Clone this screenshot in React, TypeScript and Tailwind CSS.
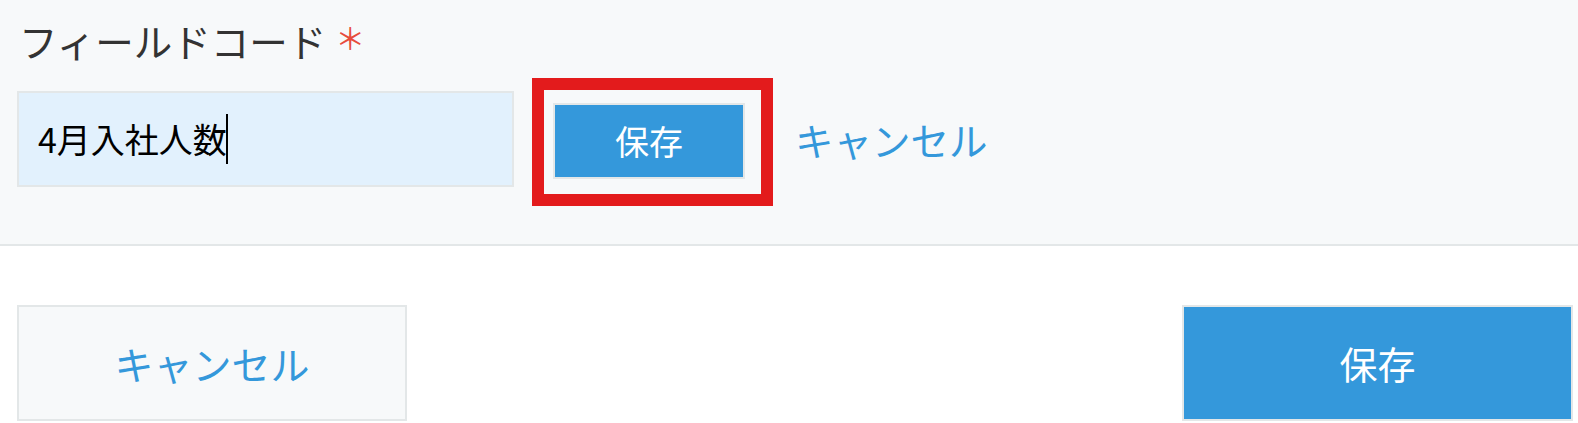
const font = { fontFamily: '"Noto Sans CJK JP", "Noto Sans", sans-serif' };

export default function App() {
  return (
    <div className="w-[1578px] h-[423px] overflow-hidden bg-white" style={font}>
      <section className="h-[246px] bg-[#f7f9fa] border-b-2 border-[#e3e7e8] pl-[17px] pt-[14px]">
        <div className="flex items-center h-[52px] leading-none text-[#333333]">
          <span className="ml-[2px] text-[38.5px]">フィールドコード</span>
          <span className="ml-[9px] text-[30px] text-[#e74c3c] -mt-[6px]">＊</span>
        </div>

        <div className="flex items-center mt-[25px]">
          <div className="w-[497px] h-[96px] border-2 border-[#e3e7e8] bg-[#e2f1fd] flex items-center pl-[19px]">
            <span className="text-[34px] leading-none text-black">4月入社人数</span>
            <span className="inline-block w-[2px] h-[50px] bg-black -ml-[1px]" />
          </div>

          <div className="relative ml-[39px] mt-[4px]">
            <button className="w-[192px] h-[76px] border-2 border-[#e3e7e8] bg-[#3498db] text-white text-[34px] leading-none">
              保存
            </button>
            <div className="absolute left-[-21px] top-[-25px] right-[-28px] bottom-[-27px] border-[12px] border-[#e31b1c]" />
          </div>

          <a className="ml-[50px] text-[38.5px] leading-none text-[#3498db]">キャンセル</a>
        </div>
      </section>

      <div className="flex justify-between pl-[17px] pr-[5px] pt-[59px]">
        <button className="w-[390px] h-[116px] border-2 border-[#e3e7e8] bg-[#f7f9fa] text-[39px] leading-none text-[#3498db]">
          キャンセル
        </button>
        <button className="w-[391px] h-[116px] border-2 border-[#e3e7e8] bg-[#3498db] text-[38px] leading-none text-white">
          保存
        </button>
      </div>
    </div>
  );
}
